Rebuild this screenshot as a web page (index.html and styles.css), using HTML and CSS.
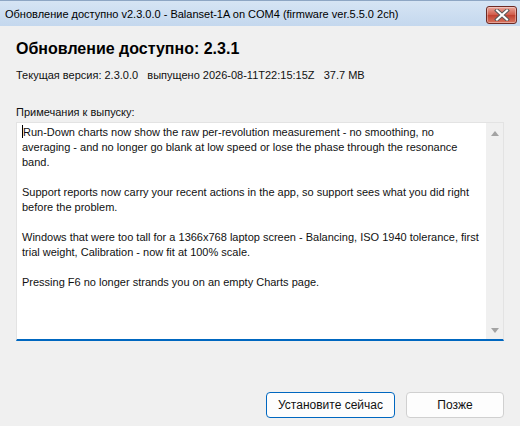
FILE: index.html
```html
<!DOCTYPE html>
<html lang="ru">
  <head>
    <meta charset="UTF-8" />
    <title>Обновление доступно</title>
    <link rel="stylesheet" href="styles.css">
  </head>
  <body>
    <div class="window">
      <div class="titlebar">
        <span class="title">Обновление доступно v2.3.0.0 - Balanset-1A on COM4 (firmware ver.5.5.0 2ch)</span>
        <button class="close" type="button">
          <svg width="16" height="12" viewBox="0 0 16 12">
            <path d="M3 1.5 L13 10.5 M13 1.5 L3 10.5" stroke="#5a5a5a" stroke-width="4" stroke-linecap="square"/>
            <path d="M3 1.5 L13 10.5 M13 1.5 L3 10.5" stroke="#ffffff" stroke-width="2" stroke-linecap="square"/>
          </svg>
        </button>
      </div>

      <div class="content">
        <h1>Обновление доступно: 2.3.1</h1>
        <p class="info">Текущая версия: 2.3.0.0&nbsp;&nbsp;&nbsp;выпущено 2026-08-11T22:15:15Z&nbsp;&nbsp;&nbsp;37.7 MB</p>

        <label class="notes-label">Примечания к выпуску:</label>
        <div class="notes">
          <div class="notes-text">
            <p><span class="caret"></span>Run-Down charts now show the raw per-revolution measurement - no smoothing, no averaging - and no longer go blank at low speed or lose the phase through the resonance band.</p>
            <p>Support reports now carry your recent actions in the app, so support sees what you did right before the problem.</p>
            <p>Windows that were too tall for a 1366x768 laptop screen - Balancing, ISO 1940 tolerance, first trial weight, Calibration - now fit at 100% scale.</p>
            <p>Pressing F6 no longer strands you on an empty Charts page.</p>
          </div>
          <div class="scrollbar">
            <span class="arrow up"></span>
            <span class="arrow down"></span>
          </div>
        </div>

        <div class="buttons">
          <button class="btn primary" type="button">Установите сейчас</button>
          <button class="btn" type="button">Позже</button>
        </div>
      </div>
    </div>
  </body>
</html>
```

FILE: styles.css
```css
html, body {
  margin: 0;
  padding: 0;
}

body {
  width: 520px;
  height: 426px;
  background: #f0f0f0;
  font-family: 'Liberation Sans', Arial, sans-serif;
  color: #000;
  overflow: hidden;
}

.window {
  display: flex;
  flex-direction: column;
  height: 100%;
}

.titlebar {
  height: 26px;
  display: flex;
  align-items: center;
  justify-content: space-between;
  padding: 0 3px 0 5px;
  background: linear-gradient(#d6e4f4, #c4d8ee);
  border-top: 1px solid #8ea6c4;
  box-sizing: border-box;
}

.title {
  font-family: 'Liberation Sans', Arial, sans-serif;
  font-size: 11px;
  color: #000;
  white-space: nowrap;
}

.close {
  width: 31px;
  height: 18px;
  margin-top: 2px;
  padding: 0;
  border: 1px solid #6d2a24;
  border-radius: 3px;
  background: linear-gradient(#e9a69a, #d05a48 50%, #c0402f 51%, #d8745f);
  display: flex;
  align-items: center;
  justify-content: center;
  box-shadow: inset 0 0 0 1px rgba(255, 255, 255, 0.35);
}

.content {
  flex: 1;
  display: flex;
  flex-direction: column;
  padding: 0 16px 0 16px;
}

h1 {
  font-size: 16px;
  font-weight: bold;
  margin: 13px 0 0 0;
  line-height: 20px;
}

.info {
  font-size: 11px;
  margin: 9px 0 0 0;
  line-height: 14px;
  color: #111;
}

.notes-label {
  display: block;
  font-size: 11px;
  margin-top: 23px;
  line-height: 14px;
  color: #111;
}

.notes {
  margin-top: 3px;
  height: 219px;
  display: flex;
  background: #fff;
  border: 1px solid #e3e3e3;
  border-bottom: 2px solid #0067c0;
  box-sizing: border-box;
}

.notes-text {
  flex: 1;
  padding: 2px 6px 0 5px;
  font-size: 11px;
  line-height: 15px;
  color: #111;
}

.notes-text p {
  margin: 0 0 15px 0;
}

.caret {
  display: inline-block;
  width: 1px;
  height: 13px;
  background: #000;
  vertical-align: -2px;
}

.scrollbar {
  width: 17px;
  background: #f0f0f0;
  display: flex;
  flex-direction: column;
  justify-content: space-between;
  align-items: center;
  padding: 8px 0 6px 0;
}

.arrow {
  width: 0;
  height: 0;
  border-left: 4px solid transparent;
  border-right: 4px solid transparent;
}

.arrow.up {
  border-bottom: 5px solid #a3a3a3;
}

.arrow.down {
  border-top: 5px solid #a3a3a3;
}

.buttons {
  display: flex;
  justify-content: flex-end;
  gap: 11px;
  margin-top: 51px;
}

.btn {
  height: 26px;
  font-family: 'Liberation Sans', Arial, sans-serif;
  font-size: 12px;
  color: #111;
  background: #fdfdfd;
  border: 1px solid #d0d0d0;
  border-radius: 4px;
  width: 98px;
  padding: 0;
}

.btn.primary {
  width: 129px;
  border-color: #0067c0;
}
```
